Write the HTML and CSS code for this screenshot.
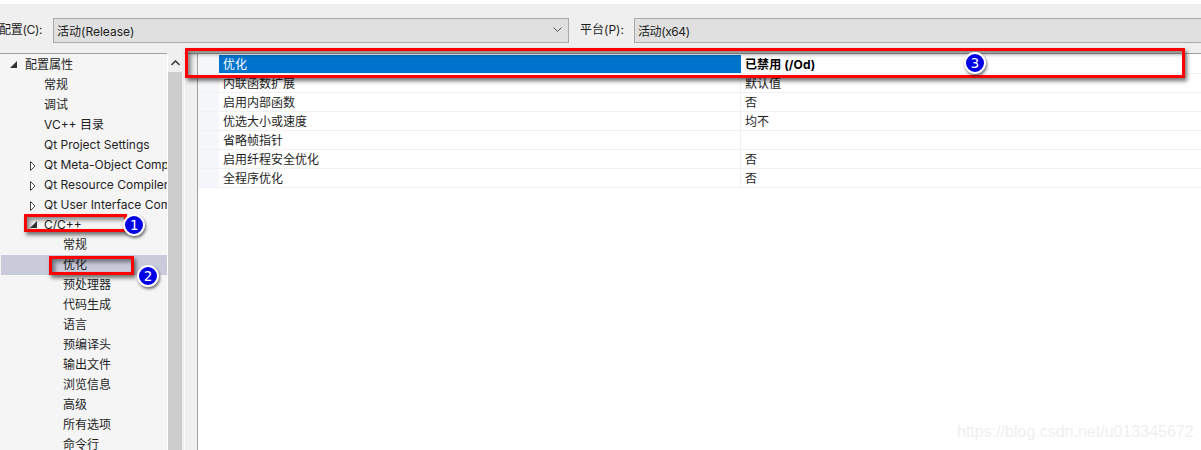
FILE: index.html
```html
<!DOCTYPE html>
<html lang="zh-CN">
<head>
<meta charset="utf-8">
<title>配置属性</title>
<link rel="stylesheet" href="styles.css">
</head>
<body>
<div class="page">
  <div class="toolbar">
    <span class="label label-config">配置(C):</span>
    <div class="select select-config"><span>活动(Release)</span>
      <svg class="chevron" width="9" height="6" viewBox="0 0 9 6"><path d="M0.5 0.5L4.5 4.5L8.5 0.5" fill="none" stroke="#555" stroke-width="1"/></svg>
    </div>
    <span class="label label-platform">平台(P):</span>
    <div class="select select-platform"><span class="tight">活动(x64)</span></div>
  </div>
  <div class="main">
    <div class="tree">
      <div class="tree-row lvl0"><svg class="arrow" width="7" height="7" viewBox="0 0 7 7"><path d="M0 7L7 0V7Z" fill="#333"/></svg>配置属性</div>
      <div class="tree-row lvl1">常规</div>
      <div class="tree-row lvl1">调试</div>
      <div class="tree-row lvl1">VC++ 目录</div>
      <div class="tree-row lvl1">Qt Project Settings</div>
      <div class="tree-row lvl1"><svg class="arrow-side" width="6" height="10" viewBox="0 0 6 10"><path d="M0.5 0.5L5 5L0.5 9.5Z" fill="#fff" stroke="#444"/></svg>Qt Meta-Object Compiler</div>
      <div class="tree-row lvl1"><svg class="arrow-side" width="6" height="10" viewBox="0 0 6 10"><path d="M0.5 0.5L5 5L0.5 9.5Z" fill="#fff" stroke="#444"/></svg>Qt Resource Compiler</div>
      <div class="tree-row lvl1"><svg class="arrow-side" width="6" height="10" viewBox="0 0 6 10"><path d="M0.5 0.5L5 5L0.5 9.5Z" fill="#fff" stroke="#444"/></svg>Qt User Interface Compiler</div>
      <div class="tree-row lvl1"><svg class="arrow-side" width="7" height="7" viewBox="0 0 7 7"><path d="M0 7L7 0V7Z" fill="#333"/></svg>C/C++</div>
      <div class="tree-row lvl2">常规</div>
      <div class="tree-row lvl2 current">优化</div>
      <div class="tree-row lvl2">预处理器</div>
      <div class="tree-row lvl2">代码生成</div>
      <div class="tree-row lvl2">语言</div>
      <div class="tree-row lvl2">预编译头</div>
      <div class="tree-row lvl2">输出文件</div>
      <div class="tree-row lvl2">浏览信息</div>
      <div class="tree-row lvl2">高级</div>
      <div class="tree-row lvl2">所有选项</div>
      <div class="tree-row lvl2">命令行</div>
    </div>
    <div class="scrollbar">
      <div class="scroll-up"><svg width="9" height="6" viewBox="0 0 9 6"><path d="M0.5 5L4.5 1L8.5 5" fill="none" stroke="#444" stroke-width="1.6"/></svg></div>
      <div class="scroll-thumb"></div>
    </div>
    <div class="splitter"></div>
    <div class="grid">
      <div class="grid-row selected"><div class="gutter"></div><div class="name">优化</div><div class="value">已禁用 (/Od)</div></div>
      <div class="grid-row"><div class="gutter"></div><div class="name">内联函数扩展</div><div class="value">默认值</div></div>
      <div class="grid-row"><div class="gutter"></div><div class="name">启用内部函数</div><div class="value">否</div></div>
      <div class="grid-row"><div class="gutter"></div><div class="name">优选大小或速度</div><div class="value">均不</div></div>
      <div class="grid-row"><div class="gutter"></div><div class="name">省略帧指针</div><div class="value"></div></div>
      <div class="grid-row"><div class="gutter"></div><div class="name">启用纤程安全优化</div><div class="value">否</div></div>
      <div class="grid-row"><div class="gutter"></div><div class="name">全程序优化</div><div class="value">否</div></div>
    </div>
  </div>
  <div class="mark mark-1"></div>
  <div class="mark mark-2"></div>
  <div class="mark mark-3"></div>
  <div class="badge badge-1">1</div>
  <div class="badge badge-2">2</div>
  <div class="badge badge-3">3</div>
  <div class="watermark">https://blog.csdn.net/u013345672</div>
</div>
</body>
</html>
```
FILE: styles.css
```css
* { box-sizing: border-box; }
html, body { margin: 0; padding: 0; }
body {
  background: #fff;
  font-family: "Inter", "Noto Sans CJK SC", sans-serif;
  font-size: 12px;
  color: #1e1e1e;
}
.page {
  position: relative;
  width: 1201px;
  height: 450px;
  overflow: hidden;
  padding-top: 4px;
}
.toolbar {
  height: 49px;
  background: #efefef;
  display: flex;
  align-items: flex-start;
  padding-top: 14px;
}
.label { line-height: 24px; white-space: nowrap; }
.label-config { width: 54px; margin-left: -1px; flex: none; letter-spacing: -0.3px; }
.label-platform { width: 54px; margin-left: 11px; flex: none; }
.tight { letter-spacing: -0.4px; }
.select {
  height: 25px;
  background: #e0e0e0;
  border: 1px solid #a9a9a9;
  display: flex;
  align-items: center;
  justify-content: space-between;
  padding: 0 3px 1px;
}
.select-config { width: 516px; flex: none; }
.select-platform { flex: 1; border-right: 0; }
.chevron { margin-right: 3px; }
.main {
  height: 397px;
  display: flex;
  background: #f0f0f0;
}
.tree {
  width: 167px;
  flex: none;
  background: #f5f5f5;
  border-top: 1px solid #a0a0a0;
  padding-top: 1px;
  overflow: hidden;
}
.tree-row {
  position: relative;
  height: 20px;
  line-height: 19px;
  white-space: nowrap;
  overflow: hidden;
  margin-left: 1px;
}
.lvl0 { padding-left: 24px; }
.lvl1 { padding-left: 43px; }
.lvl2 { padding-left: 62px; }
.current { background: #c9cbdb; }
.arrow { position: absolute; left: 9px; top: 6px; }
.arrow-side { position: absolute; left: 29px; top: 6px; }
.scrollbar {
  width: 15px;
  flex: none;
  border-left: 1px solid #fff;
  display: flex;
  flex-direction: column;
  background: #f0f0f0;
}
.scroll-up {
  height: 19px;
  flex: none;
  display: flex;
  align-items: center;
  justify-content: center;
}
.scroll-thumb { flex: 1; background: #cdcdcd; }
.splitter {
  width: 13px;
  flex: none;
  margin-left: 2px;
  border-left: 1px solid #f9f9f9;
  border-top: 1px solid #a0a0a0;
  background: #f0f0f0;
}
.grid {
  flex: 1;
  background: #fff;
  border-left: 1px solid #a0a0a0;
  border-top: 1px solid #a0a0a0;
  padding-top: 1px;
}
.grid-row {
  height: 19px;
  display: flex;
  line-height: 20px;
  border-bottom: 1px solid #f1f1f4;
}
.gutter { width: 21px; flex: none; background: #f5f7fb; }
.name { width: 522px; flex: none; padding-left: 4px; border-right: 1px solid #f1f1f4; }
.value { flex: 1; padding-left: 4px; }
.selected .name { background: #0074cc; color: #fff; border-right: 0; }
.selected .value { font-weight: 700; color: #000; letter-spacing: 0.1px; }
.mark {
  position: absolute;
  border: 3px solid #f00;
  box-shadow: 2px 3px 4px rgba(0,0,0,.55), inset 3px 3px 4px rgba(0,0,0,.45);
}
.mark-1 { left: 24px; top: 214px; width: 103px; height: 18px; }
.mark-2 { left: 49px; top: 256px; width: 85px; height: 19px; }
.mark-3 { left: 185px; top: 48px; width: 1000px; height: 30px; }
.badge {
  position: absolute;
  width: 22px;
  height: 22px;
  border-radius: 50%;
  background: #0000e6;
  border: 2px solid #fff;
  box-shadow: 1px 2px 3px rgba(0,0,0,.55);
  color: #fff;
  font-family: "DejaVu Sans Mono", monospace;
  font-size: 14px;
  line-height: 18px;
  text-align: center;
}
.badge-1 { left: 123px; top: 214px; }
.badge-2 { left: 137px; top: 265px; }
.badge-3 { left: 964px; top: 52px; }
.watermark {
  position: absolute;
  left: 957px;
  top: 421px;
  font-family: "Liberation Sans", sans-serif;
  font-size: 16px;
  line-height: 21px;
  color: #efefef;
  white-space: nowrap;
}
```
